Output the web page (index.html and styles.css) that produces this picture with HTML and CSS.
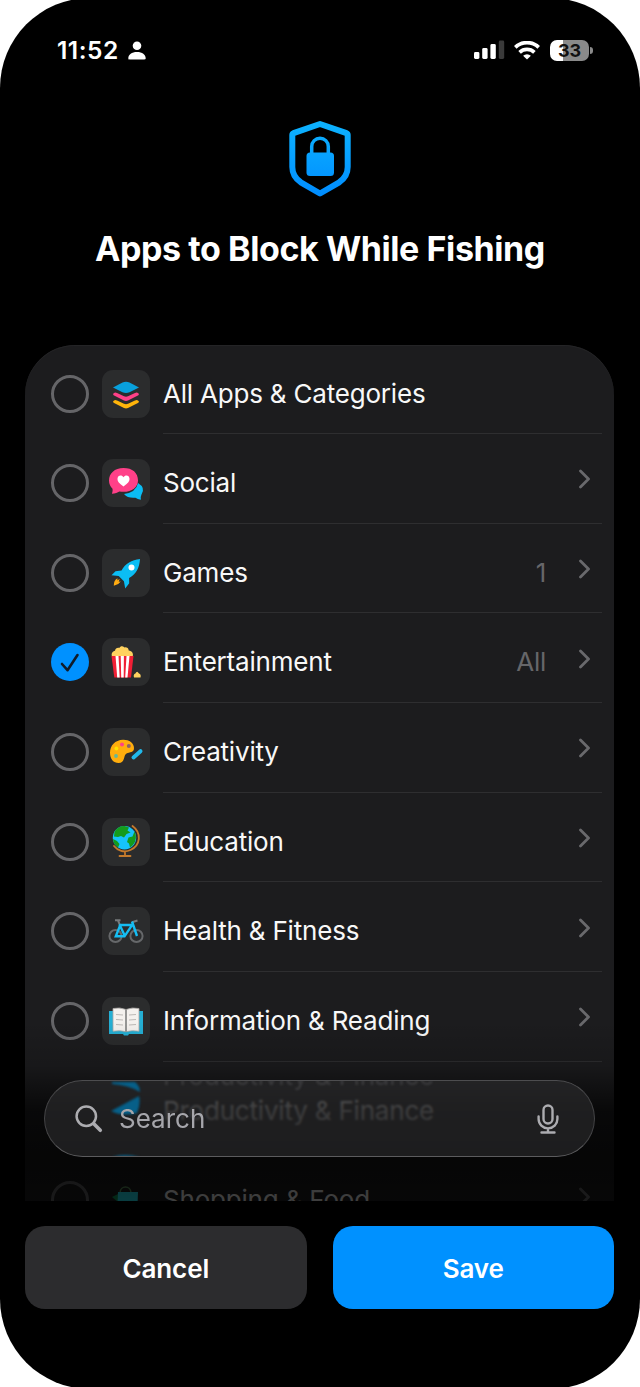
FILE: index.html
```
<!DOCTYPE html>
<html lang="en">
<head>
    <meta charset="UTF-8" />
    <meta name="viewport" content="width=device-width, initial-scale=1" />
    <title>Apps to Block</title>
    <link rel="stylesheet" href="styles.css">
</head>
<body>
    <div class="phone">
        <!-- Status bar -->
        <div class="status">
            <span class="time">11:52</span>
            <svg class="person" width="18" height="19" viewBox="0 0 18 19" fill="#fff">
                <circle cx="9" cy="4.7" r="4.3"/>
                <path d="M.3 17.2C.3 13.600 3.800 11 9 11s8.700 2.600 8.700 6.200c0 .8-.5 1.200-1.300 1.200H1.600c-.8 0-1.300-.4-1.300-1.200z"/>
            </svg>
            <svg class="signal" width="31" height="20" viewBox="0 0 31 20" fill="#fff">
                <rect x="0" y="12" width="5.400" height="7" rx="1.400"/>
                <rect x="8.200" y="8" width="5.400" height="11" rx="1.400"/>
                <rect x="16.400" y="4" width="5.400" height="15" rx="1.400"/>
                <rect x="24.800" y="0.500" width="5.400" height="18.500" rx="1.400" fill="#3a3a3a"/>
            </svg>
            <svg class="wifi" width="26" height="19" viewBox="0 0 26 19" fill="none" stroke="#fff" stroke-width="3.700">
                <path d="M1.300 6.300a17 17 0 0 1 23.400 0"/>
                <path d="M5.600 11.400a10.700 10.700 0 0 1 14.800 0"/>
                <path d="M13 18.600l-3.900-3.900a5.800 5.800 0 0 1 7.800 0z" fill="#fff" stroke="none"/>
            </svg>
            <div class="battery">33</div>
            <div class="battery-tip"></div>
        </div>

        <div class="header">
            <svg class="shield" width="64" height="77" viewBox="0 0 64 77">
                <defs>
                    <linearGradient id="azul" x1="0" y1="0" x2="0" y2="77" gradientUnits="userSpaceOnUse">
                        <stop offset="0" stop-color="#0db4ff"/>
                        <stop offset="1" stop-color="#008cff"/>
                    </linearGradient>
                </defs>
                <path d="M32 4L5.500 13.200Q4.300 13.700 4.300 15v32c0 7 3 11.500 8.500 15.300L32 73.500l19.200-11.200c5.500-3.800 8.500-8.300 8.500-15.300V15q0-1.300-1.200-1.800z" fill="none" stroke="url(#azul)" stroke-width="6" stroke-linejoin="round"/>
                <path d="M23.700 34v-7.500a8.300 8.300 0 0 1 16.600 0V34" fill="none" stroke="url(#azul)" stroke-width="3.500"/>
                <rect x="18.500" y="32.500" width="27.500" height="23.500" rx="3.500" fill="url(#azul)"/>
            </svg>
            <h1>Apps to Block While Fishing</h1>
        </div>

        <div class="list">
            <div class="row">
                <div class="circle"></div>
                <svg class="icon" viewBox="0 0 48 48">
                    <path d="M11 17.500L20.500 12.500q3.500-1.500 7 0L37 17.500l-9.500 4.700q-3.500 1.400-7 0z" fill="#08a0dc"/>
                    <path d="M11 24q1.500-2.500 4-1l7 3.300q2 .8 4 0l7-3.300q2.500-1.500 4 1l-.6 1.300-10.400 5.200q-2 .8-4 0l-10.400-5.200z" fill="#ff4088"/>
                    <path d="M11 31.500q1.500-2.500 4-1l7 3.300q2 .8 4 0l7-3.300q2.500-1.500 4 1l-.6 1.300-10.400 5.200q-2 .8-4 0l-10.400-5.200z" fill="#ffb40a"/>
                </svg>
                <div class="content"><span class="name">All Apps &amp; Categories</span></div>
            </div>
            <div class="row">
                <div class="circle"></div>
                <svg class="icon" viewBox="0 0 48 48">
                    <path d="M36 24q8 5 3.500 11.500-1 1.500-.6 5.200-3.500-.4-5.400-2-7.500.9-11.500-3.700Q34 33.500 36 24z" fill="#0bbdf4"/>
                    <path d="M21.500 9C12.500 9 7 14.500 7 21.500c0 3.500 1.300 6 3.500 8.300.3 1.800 0 3.500-.6 4.900 3.300-.1 5.700-1.100 7.500-2.200 10.500 1.800 18.600-3.300 18.600-11S30.500 9 21.500 9z" fill="#ff4088"/>
                    <path d="M21.500 27.500c-4.500-3.300-6-5-6-7.700 0-3.500 4.200-4.500 6-1.500 1.800-3 6-2 6 1.500 0 2.700-1.500 4.400-6 7.700z" fill="#fff"/>
                </svg>
                <div class="content"><span class="name">Social</span><svg class="chev" viewBox="0 0 12 20"><path d="M1.500 2L9.500 10l-8 8"/></svg></div>
            </div>
            <div class="row">
                <div class="circle"></div>
                <svg class="icon" viewBox="0 0 48 48">
                    <path d="M38 10C29.500 10.800 23.500 14.500 19.500 21.500l-6 .8-4 3.900 7.200.8 5.200 5.200 1.300 7.300 4-5.200-.1-5.200C34 25.500 37.500 19 38 10z" fill="#0bbdf4"/>
                    <circle cx="29.500" cy="18.500" r="3" fill="#fff"/>
                    <path d="M15.500 29.200q-4 2.300-3.700 7.600 4.700-1 7-4.400l-2.100.4 1-3-2.300 1.800z" fill="#ffab12"/>
                </svg>
                <div class="content"><span class="name">Games</span><span class="count">1</span><svg class="chev" viewBox="0 0 12 20"><path d="M1.500 2L9.500 10l-8 8"/></svg></div>
            </div>
            <div class="row">
                <div class="circle checked">
                    <svg width="38" height="38" viewBox="0 0 38 38"><path d="M11 21l5.500 6.200L26.500 12" fill="none" stroke="#101b29" stroke-width="2.600" stroke-linecap="round" stroke-linejoin="round"/></svg>
                </div>
                <svg class="icon" viewBox="0 0 48 48">
                    <path d="M10 18.500c-1-3 .5-5.200 3-5.700.2-2.400 2.500-3.600 4.300-2.900 1-2 3.600-2.400 5-.5 2.400-.5 4.300.8 4.400 3 3.400.3 5 3.300 4 6.100z" fill="#ffd25f"/>
                    <path d="M9.500 18h22l-2.500 21.500H12.300z" fill="#f01f35"/>
                    <path d="M13.500 18h3l1.200 21.500h-2.500zM18.700 18h3.200l-.2 21.500h-2.500zM24.500 18h3l-2 21.500h-2.300z" fill="#fff"/>
                    <path d="M32 39.500q-1-3.200 1.400-4 1.700-3.600 3.300-.2 2.700 1 1.800 4.200z" fill="#ffd25f"/>
                </svg>
                <div class="content"><span class="name">Entertainment</span><span class="count">All</span><svg class="chev" viewBox="0 0 12 20"><path d="M1.500 2L9.500 10l-8 8"/></svg></div>
            </div>
            <div class="row">
                <div class="circle"></div>
                <svg class="icon" viewBox="0 0 48 48">
                    <path d="M21 11.700c-8 .2-13 6-13 13C8 31 11.500 35 16.500 35c7 0 4.500-7.500 8-9.500 3-1.800 7.500-.2 7.500-5.500 0-5-5-8.500-11-8.300z" fill="#ffad0d"/>
                    <circle cx="20" cy="16.500" r="2" fill="#ff4088"/><circle cx="26.800" cy="18" r="2" fill="#8b6269"/>
                    <circle cx="14.400" cy="20.500" r="1.900" fill="#ffe200"/><circle cx="14" cy="28" r="1.900" fill="#62b89c"/>
                    <path d="M31.500 29.500l7-6.300" stroke="#21b8ea" stroke-width="4" stroke-linecap="round"/>
                </svg>
                <div class="content"><span class="name">Creativity</span><svg class="chev" viewBox="0 0 12 20"><path d="M1.500 2L9.500 10l-8 8"/></svg></div>
            </div>
            <div class="row">
                <div class="circle"></div>
                <svg class="icon" viewBox="0 0 48 48">
                    <circle cx="22.500" cy="19.800" r="11.700" fill="#16c3fa"/>
                    <path d="M12.500 14q3.500-6 10-5.900l4.500 1.500-1.500 3 3 2-4 1.500-2.500 3.500-3-1.500-3 1-4-.5zM11 21l4 2 2.500 3-1.500 3.500q-4.500-3-5-8.500zM32.500 13.500q3.500 7-1.500 13.500l-3 2.500-1-4-2-1.500 1.500-4.500 4-1z" fill="#149b1c"/>
                    <path d="M30.500 8c9.500 7 8 19.500-2 24-6.500 3-13 .5-16.500-4M23 33.500V38M17.500 38h11" fill="none" stroke="#c47a2c" stroke-width="1.800" stroke-linecap="round"/>
                </svg>
                <div class="content"><span class="name">Education</span><svg class="chev" viewBox="0 0 12 20"><path d="M1.500 2L9.500 10l-8 8"/></svg></div>
            </div>
            <div class="row">
                <div class="circle"></div>
                <svg class="icon" viewBox="0 0 48 48" fill="none">
                    <circle cx="13.500" cy="29" r="6.100" stroke="#66686a" stroke-width="2"/>
                    <circle cx="34.500" cy="29" r="6.100" stroke="#66686a" stroke-width="2"/>
                    <path d="M13 13.300h5.500M30 15.300l5.500-1.800M16 13.300l2 5" stroke="#77797b" stroke-width="2"/>
                    <path d="M17.500 18h13M18.500 17.500l-4.700 11.800h8.700l8-12M17.500 17.500l5.500 11.800M30 14.500l5 14.500" stroke="#15bdf3" stroke-width="2.400"/>
                </svg>
                <div class="content"><span class="name">Health &amp; Fitness</span><svg class="chev" viewBox="0 0 12 20"><path d="M1.500 2L9.500 10l-8 8"/></svg></div>
            </div>
            <div class="row">
                <div class="circle"></div>
                <svg class="icon" viewBox="0 0 48 48">
                    <path d="M7 14h34v23H27l-1 1.500h-4L21 37H7z" fill="#25afd4"/>
                    <path d="M11 11.500q7-1.500 13 1 6-2.500 13-1v22.700q-7-1.200-13 .5-6-1.700-13-.5z" fill="#f4f1ee" stroke="#aaa7a5" stroke-width=".8"/>
                    <path d="M24 12.500v22" stroke="#777" stroke-width="1.500"/>
                    <path d="M14 17.500l7 .5M14 22.500l7 .5M14 27.500l7 .5M27 18l7-.5M27 23l7-.5M27 28l7-.5" stroke="#bcb9b6" stroke-width="1"/>
                </svg>
                <div class="content"><span class="name">Information &amp; Reading</span><svg class="chev" viewBox="0 0 12 20"><path d="M1.500 2L9.500 10l-8 8"/></svg></div>
            </div>
            <div class="row">
                <div class="circle faint"></div>
                <svg class="icon bare" viewBox="0 0 48 48"></svg>
                <div class="content last"><span class="name">Productivity &amp; Finance</span></div>
            </div>
            <div class="row">
                <div class="circle"></div>
                <svg class="icon bare" viewBox="0 0 48 48">
                    <path d="M18 17c0-8 11-8 11 0" fill="none" stroke="#5f9a60" stroke-width="1.600"/>
                    <path d="M10 21l6-3v8z" fill="#0ea05c"/>
                    <path d="M16 16h20l-1 26H15z" fill="#24f0ff"/>
                </svg>
                <div class="content"><span class="name">Shopping &amp; Food</span><svg class="chev" viewBox="0 0 12 20"><path d="M1.500 2L9.500 10l-8 8"/></svg></div>
            </div>

            <div class="fade"></div>

            <!-- Glass search field floating over the last rows -->
            <div class="search">
                <span class="reflection" aria-hidden="true">Productivity &amp; Finance</span>
                <svg class="glow" width="40" height="76" viewBox="0 0 40 76">
                    <path d="M4 1h23q5 4 5 10Q20 4 4 3zM3 30Q18 22 31 15q2 8-2 17Q14 36 3 30z" fill="#075f88"/>
                    <path d="M4 76q12-4 28 0z" fill="#075f88"/>
                </svg>
                <svg class="lens" width="28" height="28" viewBox="0 0 28 28" fill="none" stroke="#acacb0" stroke-linecap="round">
                    <circle cx="11.300" cy="11.300" r="9.700" stroke-width="2.500"/>
                    <path d="M18.800 18.800l6.500 6.500" stroke-width="3.600"/>
                </svg>
                <span class="placeholder">Search</span>
                <svg class="mic" width="22" height="30" viewBox="0 0 22 30" fill="none" stroke="#acacb0" stroke-width="2.400" stroke-linecap="round">
                    <rect x="6.500" y="1.500" width="9" height="18" rx="4.500"/>
                    <path d="M1.600 12.500v2.500a9.400 9.400 0 0 0 18.800 0v-2.500M11 24.500v4M4.500 28.500h13"/>
                </svg>
            </div>
        </div>

        <div class="buttons">
            <button class="button cancel">Cancel</button>
            <button class="button save">Save</button>
        </div>
    </div>
</body>
</html>
```
FILE: styles.css
```
* {
    box-sizing: border-box;
}
body {
    margin: 0;
    background-color: #fff;
    height: 1387px;
    overflow: hidden;
    font-family: Inter, sans-serif;
    color: #fff;
}
.phone {
    width: 640px;
    height: 1391px;
    margin-top: -2px;
    background-color: #000;
    border-radius: 90px;
    overflow: hidden;
    display: flex;
    flex-direction: column;
}
.status {
    display: flex;
    align-items: center;
    height: 104px;
    padding: 0 47px 0 57px;
    flex: none;
}
.time {
    font-size: 24.5px;
    font-weight: 600;
    letter-spacing: 0.5px;
    width: 71px;
}
.signal {
    margin-left: auto;
}
.wifi {
    margin-left: 9px;
}
.battery {
    margin-left: 10px;
    width: 39px;
    height: 21px;
    border-radius: 7px;
    background: linear-gradient(90deg, #fff 13px, #8a8a8a 13px);
    color: #111;
    font-size: 18px;
    font-weight: 700;
    line-height: 21px;
    text-align: center;
}
.battery-tip {
    width: 3px;
    height: 7px;
    margin-left: 1px;
    border-radius: 0 4px 4px 0;
    background-color: #8a8a8a;
}
.header {
    height: 243px;
    padding-top: 18px;
    display: flex;
    flex-direction: column;
    align-items: center;
    flex: none;
}
h1 {
    margin: 30px 0 0;
    font-size: 34px;
    line-height: 44px;
    font-weight: 700;
    letter-spacing: -0.42px;
    white-space: nowrap;
}
.list {
    position: relative;
    height: 856px;
    margin: 0 26px 0 25px;
    border-radius: 50px 50px 0 0;
    background-color: #1c1c1e;
    box-shadow: inset 0 1px #242426;
    overflow: hidden;
    flex: none;
}
.row {
    display: flex;
    align-items: center;
    height: 89.7px;
    padding-left: 26px;
}
.row:first-child {
    height: 89px;
}
.circle {
    width: 38px;
    height: 38px;
    border: 3px solid #656568;
    border-radius: 50%;
    margin-top: 8px;
    flex: none;
}
.checked {
    border: none;
    background-color: #0091ff;
}
.faint {
    opacity: 0;
}
.icon {
    width: 48px;
    height: 48px;
    margin: 8px 13px 0 13px;
    border-radius: 11px;
    background-color: #2b2c2d;
    flex: none;
}
.bare {
    background: none;
}
.content {
    display: flex;
    align-items: center;
    align-self: stretch;
    flex: 1;
    margin-right: 12px;
    padding: 8px 11px 0 0;
    border-bottom: 1px solid #2e2e30;
}
.last {
    border: none;
}
.name {
    font-size: 26px;
    letter-spacing: -0.2px;
    color: #f8f8f8;
    white-space: nowrap;
}
.count {
    margin-left: auto;
    margin-right: 33px;
    font-size: 26px;
    letter-spacing: -0.3px;
    color: #666669;
}
.chev {
    width: 12px;
    height: 20px;
    margin-left: auto;
    margin-bottom: 6px;
    fill: none;
    stroke: #69696c;
    stroke-width: 2.800;
    stroke-linecap: round;
    stroke-linejoin: round;
}
.count + .chev {
    margin-left: 0;
}
.fade {
    position: absolute;
    left: 0;
    right: 0;
    bottom: 0;
    height: 180px;
    background: linear-gradient(rgba(0, 0, 0, 0), rgba(0, 0, 0, 0.15) 25%, rgba(0, 0, 0, 0.7) 50%, rgba(0, 0, 0, 0.8) 75%, rgba(0, 0, 0, 0.75));
}
.search {
    position: absolute;
    left: 19px;
    right: 19px;
    bottom: 44px;
    height: 77px;
    display: flex;
    align-items: center;
    padding: 0 35px 0 30px;
    border: 1px solid #444446;
    border-top-color: #4d4d4f;
    border-bottom-color: #5c5c5e;
    border-radius: 39px;
    background-color: rgba(50, 50, 51, 0.55);
    backdrop-filter: blur(1px);
    overflow: hidden;
}
.reflection {
    position: absolute;
    left: 118px;
    top: -20px;
    font-size: 26px;
    line-height: 30px;
    letter-spacing: -0.2px;
    color: #3c3c3e;
    filter: blur(1px);
}
.glow {
    position: absolute;
    left: 63px;
    top: 0;
    filter: blur(1px);
}
.lens, .placeholder, .mic {
    position: relative;
}
.placeholder {
    margin-left: 16px;
    font-size: 26px;
    color: #a6a6ab;
}
.mic {
    margin-left: auto;
}
.buttons {
    display: flex;
    gap: 26px;
    padding: 25px 26px 0 25px;
}
.button {
    flex: 1;
    height: 83px;
    padding: 2px 0 0;
    border: none;
    border-radius: 20px;
    font-family: inherit;
    font-size: 26px;
    font-weight: 600;
    letter-spacing: -0.1px;
    color: #fff;
}
.cancel {
    background-color: #2c2c2e;
}
.save {
    background-color: #0091ff;
}
```
